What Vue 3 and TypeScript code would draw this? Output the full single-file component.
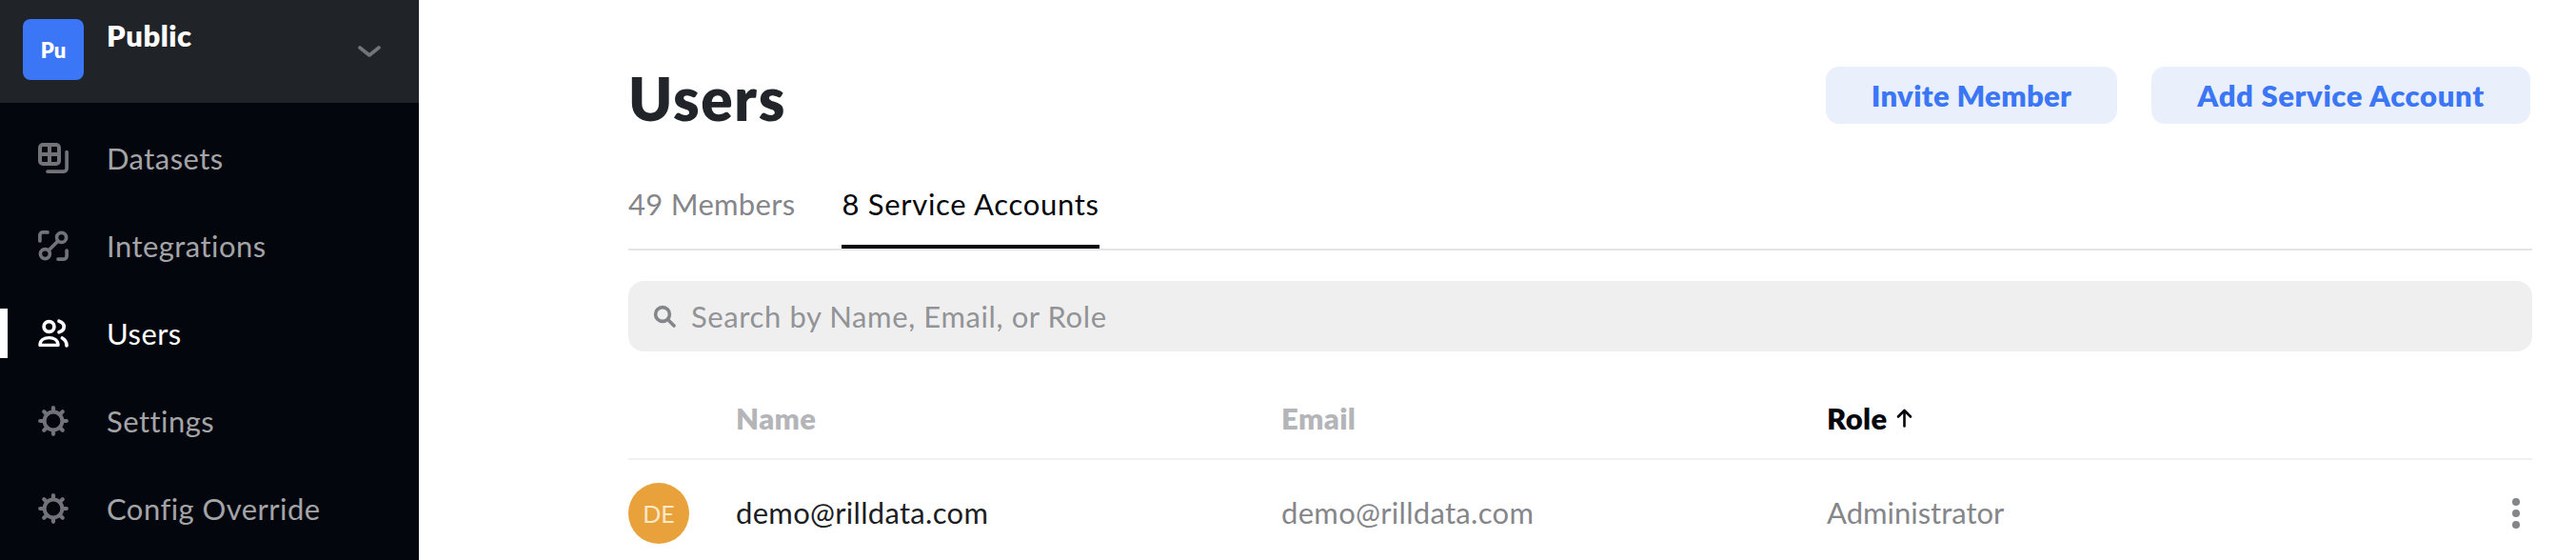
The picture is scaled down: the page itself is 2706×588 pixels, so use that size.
<script setup lang="ts">
const navItems = [
  { label: 'Datasets', icon: 'datasets' },
  { label: 'Integrations', icon: 'integrations' },
  { label: 'Users', icon: 'users', active: true },
  { label: 'Settings', icon: 'gear' },
  { label: 'Config Override', icon: 'gear' },
]
const teeth = [0, 45, 90, 135, 180, 225, 270, 315]
</script>

<template>
  <div class="page">
    <aside class="sidebar">
      <div class="org">
        <div class="logo">Pu</div>
        <div class="org-name">Public</div>
        <svg class="chevron" viewBox="0 0 24 12" width="24" height="12" fill="none">
          <path d="M2 2l10 8 10-8" stroke="#72757b" stroke-width="3.6" stroke-linecap="round" stroke-linejoin="round" />
        </svg>
      </div>
      <nav class="nav">
        <a v-for="item in navItems" :key="item.label" class="nav-item" :class="{ active: item.active }">
          <span v-if="item.active" class="marker"></span>
          <svg class="nav-icon" viewBox="0 0 32 32" width="32" height="32" fill="none" stroke="currentColor" stroke-width="3.7" stroke-linecap="round" stroke-linejoin="round">
            <template v-if="item.icon === 'datasets'">
              <rect x="2" y="2" width="20" height="20" rx="3" stroke-width="4" />
              <path d="M12 2v20M2 12h20" stroke-width="4" stroke-linecap="butt" />
              <path d="M30.1 9.5v17.6a3 3 0 0 1-3 3H10" />
            </template>
            <template v-else-if="item.icon === 'integrations'">
              <circle cx="24.6" cy="7.4" r="5" />
              <circle cx="7.4" cy="24.6" r="5" />
              <path d="M11 21L21 11" />
              <path d="M1.9 11V4.9a3 3 0 0 1 3-3H10" />
              <path d="M30.1 21v6.1a3 3 0 0 1-3 3H21" />
            </template>
            <template v-else-if="item.icon === 'users'">
              <circle cx="11.5" cy="9" r="5.4" />
              <path d="M2 28.4c0-5 4.2-7.8 9.5-7.8s9.5 2.8 9.5 7.8z" stroke-width="3.4" />
              <path d="M22 3.2c3.2 1 5.2 3.2 5.2 5.8s-2 4.8-5.2 5.8" />
              <path d="M25.4 21c2.8 1.6 4.6 4.2 4.6 7.8" />
            </template>
            <template v-else>
              <circle cx="16" cy="16" r="9.4" stroke-width="4" />
              <path v-for="t in teeth" :key="t" d="M16 2.2v4" stroke-width="4.2" :transform="`rotate(${t} 16 16)`" />
            </template>
          </svg>
          <span class="nav-label">{{ item.label }}</span>
        </a>
      </nav>
    </aside>

    <main class="main">
      <header class="head">
        <h1 class="title">Users</h1>
        <div class="actions">
          <button class="btn invite">Invite Member</button>
          <button class="btn add">Add Service Account</button>
        </div>
      </header>

      <div class="tabs">
        <div class="tab">49 Members</div>
        <div class="tab current">8 Service Accounts</div>
      </div>

      <div class="search">
        <svg class="search-icon" viewBox="0 0 24 24" width="24" height="24" fill="none" stroke="#84868a" stroke-width="3.6" stroke-linecap="round">
          <circle cx="10" cy="10" r="7.4" />
          <path d="M16 16l6 6" />
        </svg>
        <span class="search-text">Search by Name, Email, or Role</span>
      </div>

      <div class="row head-row">
        <span></span>
        <span class="th">Name</span>
        <span class="th">Email</span>
        <span class="th sorted">Role
          <svg class="arrow" viewBox="0 0 17 20" width="17" height="20" fill="none" stroke="#05070c" stroke-width="2.6" stroke-linecap="round" stroke-linejoin="round">
            <path d="M8.5 18.5V2M2 8.5L8.5 2 15 8.5" />
          </svg>
        </span>
        <span></span>
      </div>

      <div class="row body-row">
        <span class="avatar">DE</span>
        <span class="td name">demo@rilldata.com</span>
        <span class="td mail">demo@rilldata.com</span>
        <span class="td">Administrator</span>
        <span class="kebab"><i></i><i></i><i></i></span>
      </div>
    </main>
  </div>
</template>

<style>
html, body { margin: 0; background: #fff; }
</style>

<style scoped>
.page {
  width: 2706px;
  height: 588px;
  overflow: hidden;
  display: flex;
  background: #fff;
  font-family: Lato, "Open Sans", sans-serif;
}
.sidebar {
  width: 440px;
  flex: none;
  background: #03060d;
}
.org {
  height: 108px;
  background: #202328;
  display: flex;
  align-items: flex-start;
  padding: 20px 40px 0 24px;
  box-sizing: border-box;
}
.logo {
  width: 64px;
  height: 64px;
  border-radius: 8px;
  background: #3b76f6;
  color: #fff;
  font-weight: 800;
  font-size: 22px;
  display: flex;
  align-items: center;
  justify-content: center;
}
.org-name {
  margin-left: 24px;
  color: #fff;
  font-weight: 800;
  font-size: 31px;
  letter-spacing: 0.5px;
  line-height: 36px;
  margin-top: -1px;
  flex: 1;
}
.chevron { margin-top: 28px; }
.nav { padding-top: 12px; }
.nav-item {
  position: relative;
  height: 92px;
  display: flex;
  align-items: center;
  padding-left: 40px;
  color: #717379;
}
.nav-item.active { color: #fff; }
.marker {
  position: absolute;
  left: 0;
  top: 20px;
  width: 8px;
  height: 52px;
  background: #fff;
}
.nav-icon { flex: none; }
.nav-label {
  margin-left: 40px;
  font-size: 31px;
  letter-spacing: 0.45px;
  color: #a3a4a8;
}
.nav-item.active .nav-label { color: #fff; }
.main {
  flex: 1;
  padding: 0 46px 0 220px;
  box-sizing: border-box;
  min-width: 0;
}
.head {
  height: 200px;
  display: flex;
  justify-content: space-between;
  align-items: flex-start;
  padding-top: 70px;
  box-sizing: border-box;
  margin-bottom: -1px;
}
.title {
  margin: -2px 0 0;
  font-size: 62px;
  line-height: 70px;
  letter-spacing: 1.7px;
  font-weight: 800;
  color: #212429;
}
.actions { display: flex; gap: 36px; padding-right: 2px; }
.btn {
  height: 60px;
  border: 0;
  border-radius: 14px;
  background: #e9f0fb;
  color: #3b76f6;
  font-family: inherit;
  font-weight: 800;
  font-size: 31px;
  letter-spacing: 0.6px;
  padding: 0;
}
.invite { width: 306px; letter-spacing: 0.35px; }
.add { width: 398px; letter-spacing: 0.65px; }
.tabs {
  display: flex;
  gap: 49px;
  height: 62px;
  margin-top: -1px;
  border-bottom: 2px solid #e5e5e5;
}
.tab {
  height: 62px;
  box-sizing: border-box;
  font-size: 31px;
  letter-spacing: 0.3px;
  line-height: 30px;
  color: #85868a;
}
.tab.current {
  color: #05070c;
  letter-spacing: 0.7px;
  border-bottom: 4px solid #05070c;
}
.search {
  margin-top: 32px;
  height: 74px;
  border-radius: 16px;
  background: #efefef;
  display: flex;
  align-items: center;
  padding-left: 26px;
}
.search-text {
  margin-left: 16px;
  font-size: 31px;
  letter-spacing: 0.6px;
  color: #929396;
}
.row {
  display: grid;
  grid-template-columns: 113px 573px 573px 1fr 24px;
  align-items: center;
}
.head-row {
  height: 114px;
  padding-top: 28px;
  border-bottom: 2px solid #f0f0f0;
  box-sizing: border-box;
}
.th {
  font-size: 31px;
  font-weight: 800;
  letter-spacing: 0.4px;
  color: #b4b5b9;
}
.sorted {
  color: #05070c;
  display: flex;
  align-items: center;
  gap: 9px;
}
.body-row { height: 112px; }
.avatar {
  width: 64px;
  height: 64px;
  border-radius: 50%;
  background: #e9a23b;
  color: #fde9c6;
  font-size: 25px;
  display: flex;
  align-items: center;
  justify-content: center;
}
.td {
  font-size: 31px;
  color: #85868a;
  padding-bottom: 3px;
}
.name, .mail { letter-spacing: 0.3px; }
.name { color: #1c1e24; }
.kebab {
  display: flex;
  flex-direction: column;
  align-items: center;
  gap: 4px;
  width: 8px;
  margin-left: 3px;
}
.kebab i {
  width: 8px;
  height: 8px;
  flex: none;
  border-radius: 50%;
  background: #85868a;
}
</style>
